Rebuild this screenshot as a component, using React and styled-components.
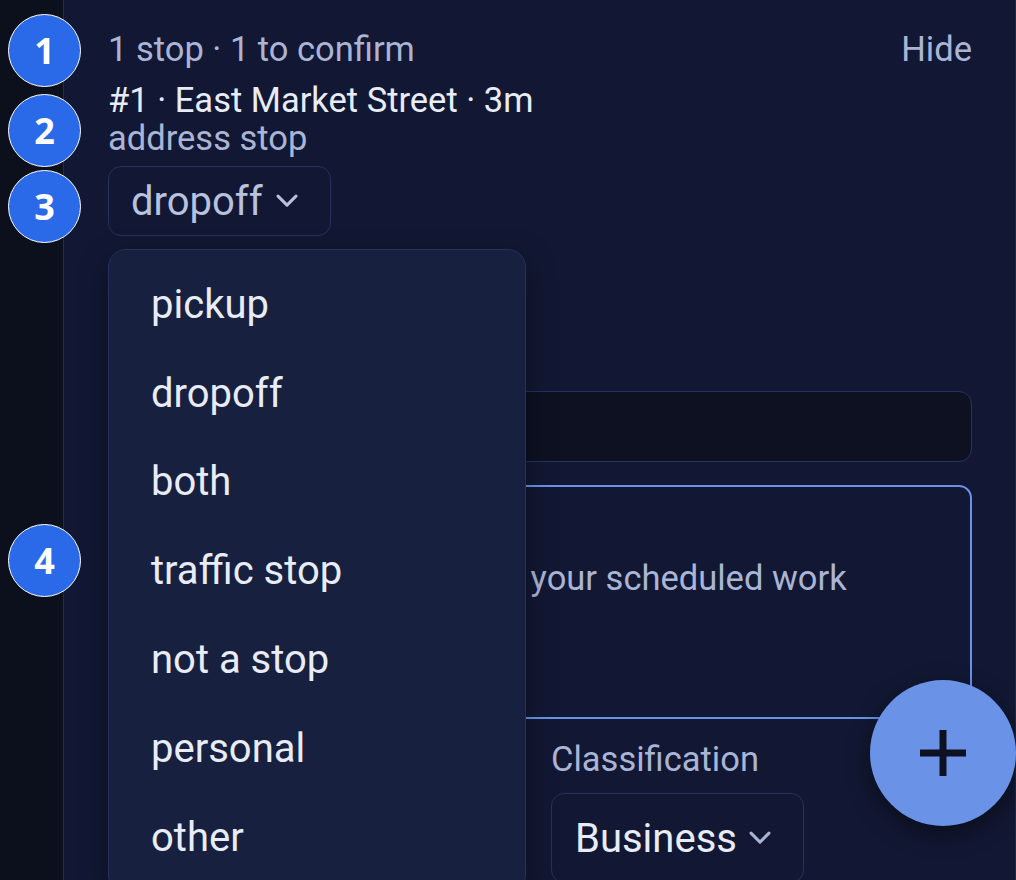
import React from 'react';
import styled, { createGlobalStyle } from 'styled-components';

const GlobalStyle = createGlobalStyle`
  html, body {
    margin: 0;
    padding: 0;
    height: 880px;
    overflow: hidden;
    background: #121833;
    font-family: Roboto, "Noto Sans", "Liberation Sans", sans-serif;
  }
  * { box-sizing: border-box; }
`;

const purposes = ['pickup', 'dropoff', 'both', 'traffic stop', 'not a stop', 'personal', 'other'];

const Chevron = ({ size = 22 }) => (
  <svg width={size} height={size * 0.6} viewBox="0 0 22 13" fill="none">
    <path d="M2 2l9 9 9-9" stroke="currentColor" strokeWidth="3" strokeLinecap="round" strokeLinejoin="round" />
  </svg>
);

const App = () => (
  <>
    <GlobalStyle />
    <Page>
      <Sidebar />
      <Panel>
        <Header>
          <span>1 stop · 1 to confirm</span>
          <HideButton>Hide</HideButton>
        </Header>

        <StopTitle>#1 · East Market Street · 3m</StopTitle>
        <StopKind>address stop</StopKind>

        <SelectWrap>
          <SelectButton>
            dropoff
            <Chevron />
          </SelectButton>
          <Menu>
            {purposes.map((p) => (
              <MenuItem key={p}>{p}</MenuItem>
            ))}
          </Menu>
        </SelectWrap>

        <Form>
          <Input defaultValue="" />
          <Notes placeholder={'Notes\nExplain how this stop fits your scheduled work'} />
          <Row>
            <Field />
            <Field>
              <FieldLabel>Classification</FieldLabel>
              <BigSelect>
                Business
                <Chevron />
              </BigSelect>
            </Field>
          </Row>
        </Form>

        <Fab aria-label="Add">
          <svg width="48" height="48" viewBox="0 0 48 48">
            <path d="M24 1v46M1 24h46" stroke="#0d1122" strokeWidth="7" />
          </svg>
        </Fab>
      </Panel>

      <Badge $top={14}>1</Badge>
      <Badge $top={94}>2</Badge>
      <Badge $top={170}>3</Badge>
      <Badge $top={524}>4</Badge>
    </Page>
  </>
);

const Page = styled.div`
  position: relative;
  display: flex;
  width: 1016px;
  height: 880px;
  overflow: hidden;
`;

const Sidebar = styled.aside`
  width: 63px;
  flex-shrink: 0;
  background: #0c0f1c;
`;

const Panel = styled.main`
  position: relative;
  flex: 1;
  display: flex;
  flex-direction: column;
  padding: 28px 43px 0 44px;
  background: #121833;
  border-left: 1px solid #222c58;
  border-right: 1px solid #1c2550;
`;

const Header = styled.div`
  display: flex;
  justify-content: space-between;
  align-items: center;
  font-size: 34.5px;
  line-height: 42px;
  color: #aab5d5;
`;

const HideButton = styled.span`
  cursor: pointer;
`;

const StopTitle = styled.div`
  margin-top: 11px;
  font-size: 34.5px;
  line-height: 38px;
  color: #e8ecf7;
`;

const StopKind = styled.div`
  font-size: 34.5px;
  line-height: 38px;
  color: #aab5d5;
`;

const SelectWrap = styled.div`
  position: relative;
  align-self: flex-start;
  margin-top: 9px;
  z-index: 5;
`;

const SelectButton = styled.div`
  display: flex;
  align-items: center;
  gap: 13px;
  height: 70px;
  padding: 0 32px 0 22px;
  border: 1.5px solid #27315c;
  border-radius: 13px;
  font-size: 40px;
  color: #b7c2df;
`;

const Menu = styled.ul`
  position: absolute;
  top: calc(100% + 13px);
  left: 0;
  width: 418px;
  margin: 0;
  padding: 10px 0;
  list-style: none;
  background: #18203f;
  border: 1.5px solid #263060;
  border-radius: 18px;
  box-shadow: 0 10px 30px rgba(0, 0, 0, 0.35);
`;

const MenuItem = styled.li`
  display: flex;
  align-items: center;
  height: 88.8px;
  padding-left: 42px;
  font-size: 40px;
  color: #e8ecf7;
`;

const Form = styled.div`
  display: flex;
  flex-direction: column;
  margin-top: 155px;
`;

const Input = styled.input`
  height: 71px;
  padding: 0 22px;
  background: #0d1122;
  border: 1.5px solid #27315c;
  border-radius: 13px;
  font-size: 35px;
  color: #e8ecf7;
  outline: none;
`;

const Notes = styled.textarea`
  margin-top: 23px;
  height: 234px;
  padding: 18px 30px;
  background: #121833;
  border: 2px solid #6a93e8;
  border-radius: 13px;
  font-family: inherit;
  font-size: 34.5px;
  line-height: 49px;
  color: #e8ecf7;
  resize: none;
  outline: none;

  &::placeholder {
    color: #aab5d5;
  }
`;

const Row = styled.div`
  display: grid;
  grid-template-columns: 1fr 1fr;
  gap: 22px;
  margin-top: 19px;
`;

const Field = styled.div`
  display: flex;
  flex-direction: column;
  align-items: flex-start;
`;

const FieldLabel = styled.div`
  font-size: 34.5px;
  line-height: 42px;
  margin-bottom: 13px;
  color: #aab5d5;
`;

const BigSelect = styled.div`
  display: flex;
  align-items: center;
  gap: 12px;
  height: 90px;
  padding: 0 32px 0 23px;
  border: 1.5px solid #27315c;
  border-radius: 13px;
  font-size: 40px;
  color: #e8ecf7;

  svg {
    color: #aab5d5;
  }
`;

const Fab = styled.button`
  position: absolute;
  right: -1px;
  top: 680px;
  width: 146px;
  height: 146px;
  border: none;
  border-radius: 50%;
  display: flex;
  align-items: center;
  justify-content: center;
  background: #6a93e8;
  box-shadow: 0 8px 24px rgba(0, 0, 0, 0.45);
  cursor: pointer;
`;

const Badge = styled.div`
  position: absolute;
  left: 8px;
  top: ${(p) => p.$top}px;
  width: 73px;
  height: 73px;
  border-radius: 50%;
  border: 1.5px solid #ffffff;
  background: #2a6ae9;
  display: flex;
  align-items: center;
  justify-content: center;
  font-family: "Open Sans", "Liberation Sans", sans-serif;
  font-weight: 700;
  font-size: 36px;
  color: #ffffff;
  z-index: 10;
`;

export default App;
